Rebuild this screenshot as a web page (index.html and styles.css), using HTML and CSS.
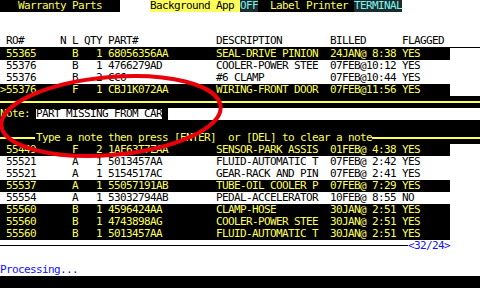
FILE: index.html
```html
<!DOCTYPE html>
<html>
<head>
<meta charset="utf-8">
<link rel="stylesheet" href="styles.css">
</head>
<body>
<div class="screen">
  <div class="row status"><span class="s-title">   Warranty Parts   </span><span class="s-gap">     </span><span class="s-bg">Background App </span><span class="s-cyan">OFF</span><span class="s-label">  Label Printer </span><span class="s-cyan">TERMINAL</span></div>
  <div class="row"></div>
  <div class="row"></div>
  <div class="row hdr"> RO#      N L QTY PART#             DESCRIPTION        BILLED      FLAGGED</div>
  <div class="row hi"> 55365      B   1 68056356AA        SEAL-DRIVE PINION  24JAN@ 8:38 YES    </div>
  <div class="row"> 55376      B   1 4766279AD         COOLER-POWER STEE  07FEB@10:12 YES    </div>
  <div class="row"> 55376      B   2 CC6               #6 CLAMP           07FEB@10:44 YES    </div>
  <div class="row hi">&gt;55376      F   1 CBJ1K072AA        WIRING-FRONT DOOR  07FEB@11:56 YES    </div>
  <div class="row dark"><span class="hline"></span></div>
  <div class="row note"><span class="n-label">Note: </span><span class="n-text">PART MISSING FROM CAR</span><span class="n-cursor"> </span><span class="n-rest"></span></div>
  <div class="row dark"></div>
  <div class="row dark help"><span class="hline short"></span><span class="help-text">Type a note then press [ENTER]  or [DEL] to clear a note</span><span class="hline"></span></div>
  <div class="row hi"> 55449      F   2 1AF63T7ZAA        SENSOR-PARK ASSIS  01FEB@ 4:38 YES    </div>
  <div class="row"> 55521      A   1 5013457AA         FLUID-AUTOMATIC T  07FEB@ 2:42 YES    </div>
  <div class="row"> 55521      A   1 5154517AC         GEAR-RACK AND PIN  07FEB@ 2:41 YES    </div>
  <div class="row hi"> 55537      A   1 55057191AB        TUBE-OIL COOLER P  07FEB@ 7:29 YES    </div>
  <div class="row"> 55554      A   1 53032794AB        PEDAL-ACCELERATOR  10FEB@ 8:55 NO     </div>
  <div class="row hi"> 55560      B   1 4596424AA         CLAMP-HOSE         30JAN@ 2:51 YES    </div>
  <div class="row hi"> 55560      B   1 4743898AG         COOLER-POWER STEE  30JAN@ 2:51 YES    </div>
  <div class="row hi"> 55560      B   1 5013457AA         FLUID-AUTOMATIC T  30JAN@ 2:51 YES    </div>
  <div class="row pager"><span class="pline"></span><span class="pcount">&lt;32/24&gt;</span></div>
  <div class="row"></div>
  <div class="row msg">Processing...</div>
  <div class="row bottom"></div>
  <svg class="mark" width="480" height="288" viewBox="0 0 480 288">
    <ellipse cx="111" cy="116" rx="110" ry="39" transform="rotate(-5 111 116)" fill="none" stroke="#e8000b" stroke-width="4"/>
  </svg>
</div>
</body>
</html>
```
FILE: styles.css
```css
html, body {
  margin: 0;
  padding: 0;
  background: #ffffff;
}
.screen {
  position: relative;
  width: 480px;
  height: 288px;
  overflow: hidden;
  background: #ffffff;
  font-family: "DejaVu Sans Mono", "Liberation Mono", monospace;
  font-size: 11px;
  letter-spacing: -0.6226px;
  color: #000000;
}
.row {
  height: 12px;
  line-height: 12px;
  white-space: pre;
  display: flex;
  align-items: center;
}
.status .s-title {
  background: #000000;
  color: #ffff5a;
}
.status .s-bg {
  background: #ffff5a;
  color: #000000;
}
.status .s-cyan {
  background: #1c2c2c;
  color: #7ff5f0;
}
.status .s-label {
  background: #000000;
  color: #ffff5a;
}
.hdr {
  border-bottom: 1px solid #000000;
  height: 11px;
  align-items: flex-end;
}
.hi {
  width: 450px;
  background: #000000;
  color: #ffff5a;
}
.dark {
  background: #000000;
  color: #ffff5a;
}
.hline {
  flex: 1;
  height: 2px;
  background: #ffff5a;
}
.hline.short {
  flex: 0 0 35px;
}
.help-text {
  padding-left: 1px;
}
.note {
  background: #000000;
  color: #ffff5a;
}
.note .n-text {
  background: #ffffff;
  color: #000000;
  height: 10px;
  line-height: 10px;
}
.note .n-cursor {
  background: #000000;
}
.note .n-rest {
  flex: 1;
  align-self: stretch;
  background: #ffffff;
}
.pager .pline {
  width: 408px;
  height: 1px;
  background: #000000;
  margin-top: -2px;
}
.pager .pcount {
  color: #1010ff;
}
.msg {
  color: #1010ff;
}
.bottom {
  background: #000000;
}
.mark {
  position: absolute;
  left: 0;
  top: 0;
  pointer-events: none;
}
```
